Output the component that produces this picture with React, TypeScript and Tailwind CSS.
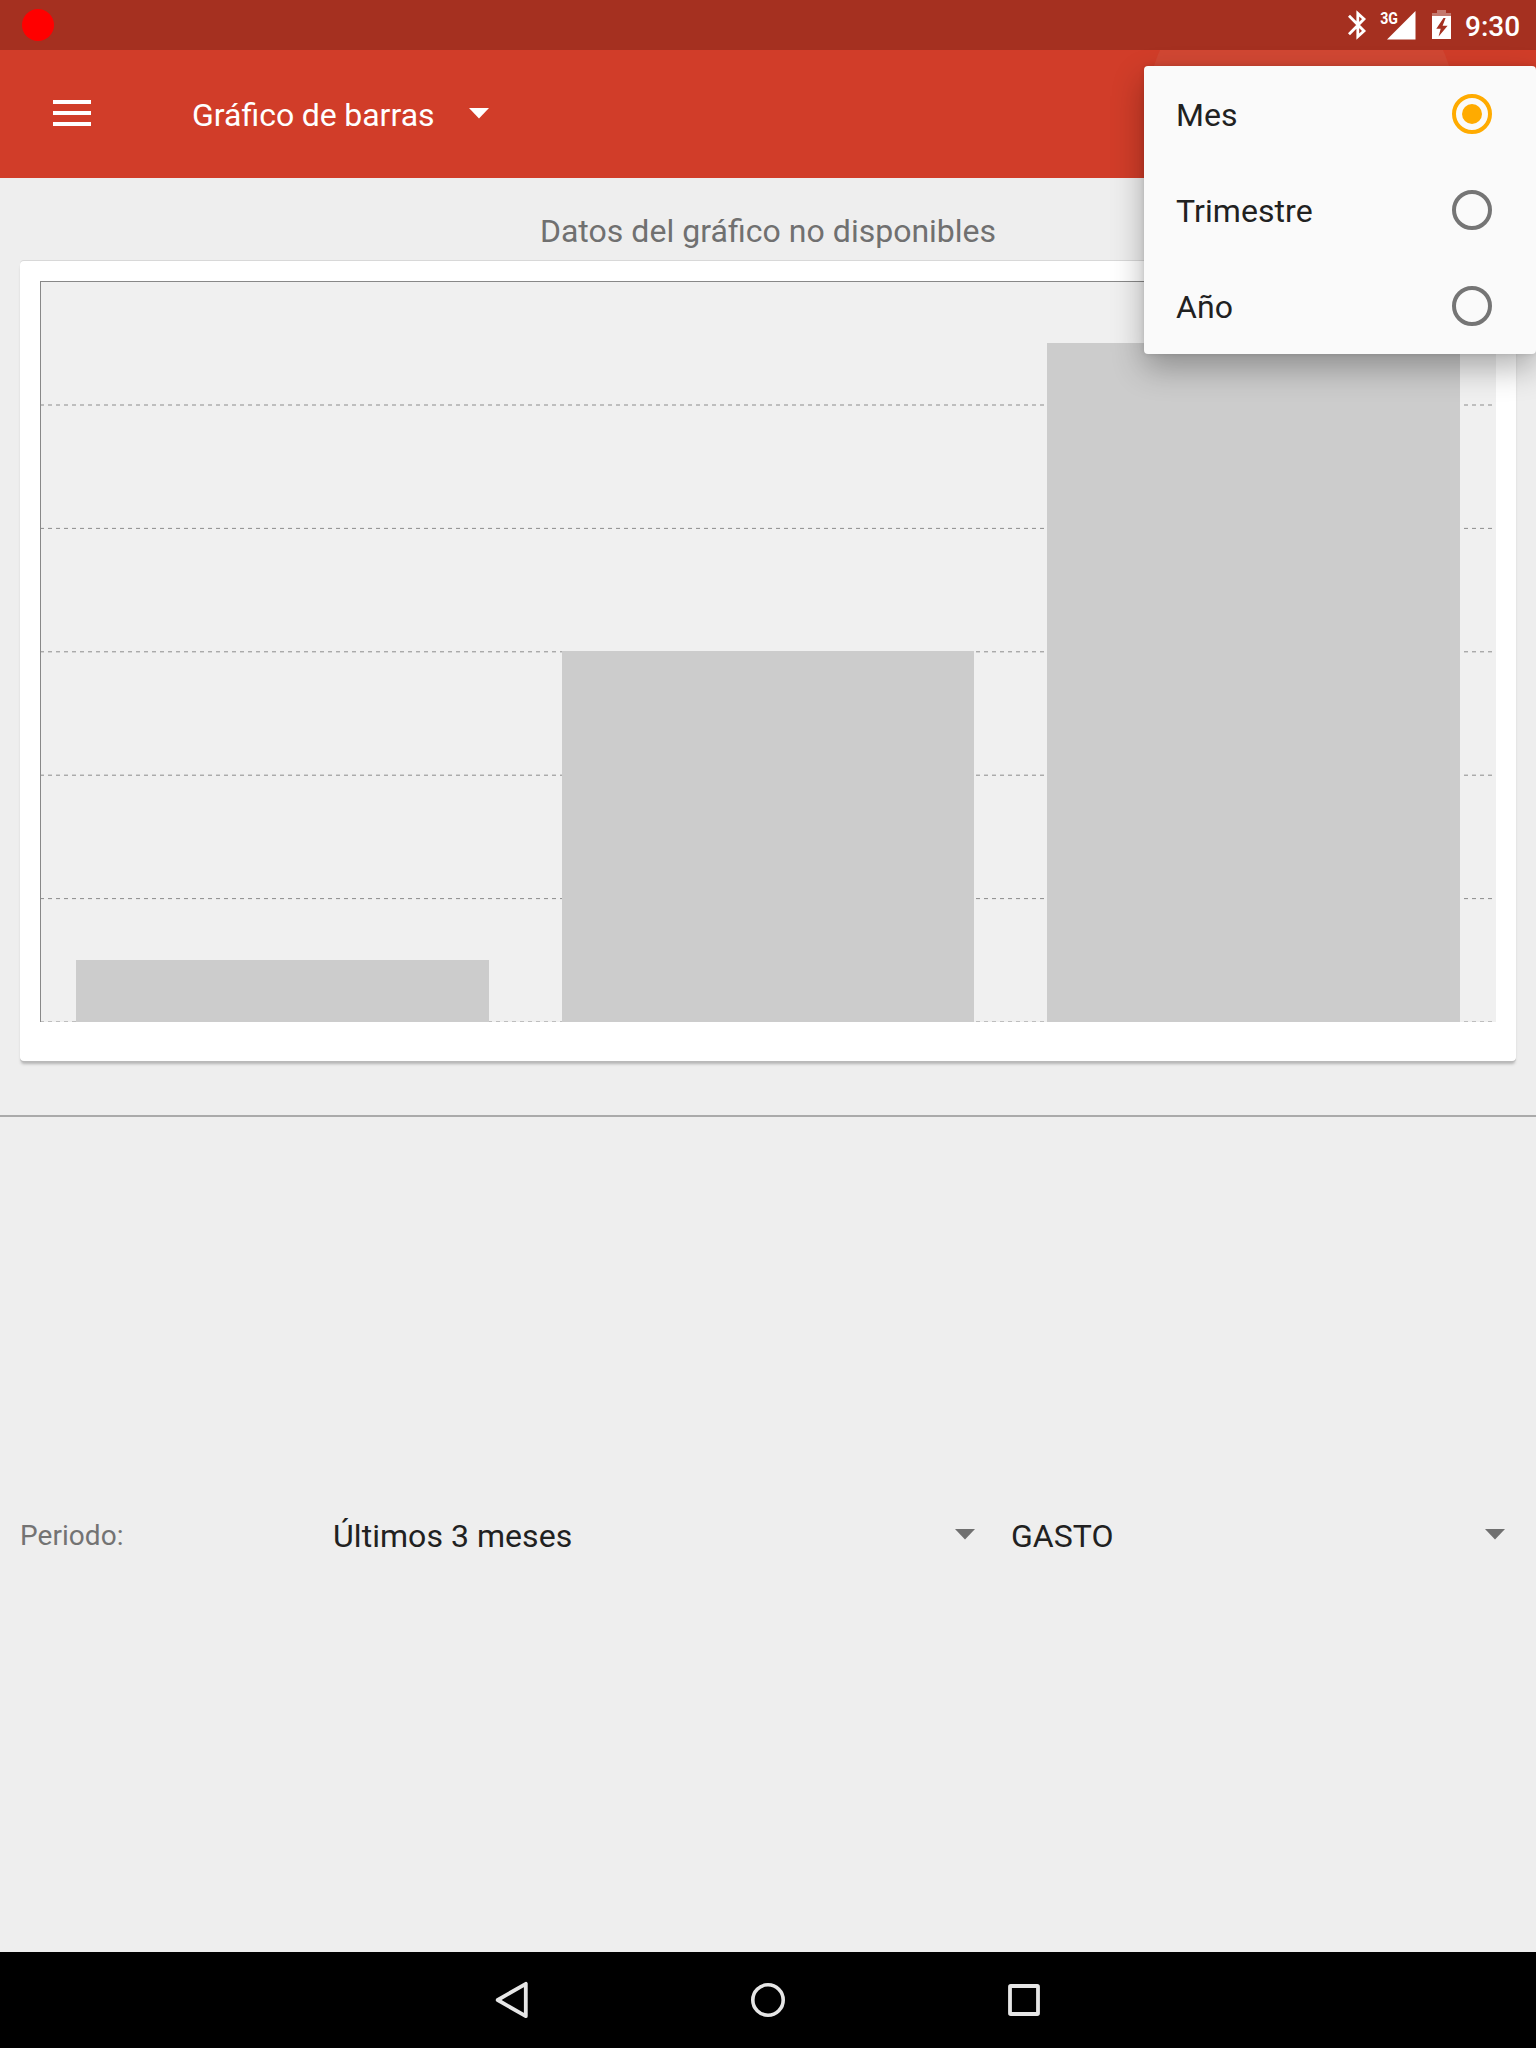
import React from "react";

const GRID_LINES = [405, 528.4, 651.8, 775.2, 898.6, 1022];
const BARS = [
  { x: 76, y: 960, w: 413 },
  { x: 562, y: 651, w: 412 },
  { x: 1047, y: 343, w: 413 },
];
const OPTIONS = [
  { label: "Mes", selected: true },
  { label: "Trimestre", selected: false },
  { label: "Año", selected: false },
];

function Caret({ className }: { className: string }) {
  return (
    <svg className={className} width="20" height="11" viewBox="0 0 20 11">
      <path d="M0 0h20L10 10.5z" fill="currentColor" />
    </svg>
  );
}

function StatusBar() {
  return (
    <div className="flex h-[50px] items-start bg-[#a53020] text-white">
      <div className="mt-[9px] ml-[22px] size-8 rounded-full bg-[#ff0000]" />
      <svg className="ml-auto" width="125" height="50" viewBox="1340 0 125 50">
        <path
          d="M1349 15.7L1364 31L1357.8 36.6V13.4L1364 19L1349 34.3"
          fill="none"
          stroke="white"
          strokeWidth="2.8"
        />
        <path d="M1387 39.5L1415.5 11V39.5z" fill="white" />
        <text
          x="1380.2"
          y="23.5"
          fill="white"
          fontFamily="Roboto"
          fontWeight="700"
          fontSize="16.5"
          textLength="17.8"
          lengthAdjust="spacingAndGlyphs"
        >
          3G
        </text>
        <path d="M1437 10h9v3h5v3h-19v-3h5z" fill="white" fillOpacity="0.35" />
        <path
          d="M1432 16h19v23h-19zM1443.5 18L1436.3 28.7H1440.7L1438.6 36.6L1447.6 25.8H1442.6L1445.6 18z"
          fill="white"
          fillRule="evenodd"
        />
      </svg>
      <div className="mr-4 w-[55px] text-right text-[28px] leading-[54px] font-medium whitespace-nowrap">
        9:30
      </div>
    </div>
  );
}

function Toolbar() {
  return (
    <div className="relative flex h-32 items-start overflow-hidden bg-[#d13d29] text-white">
      <svg className="mt-[50px] ml-[53px]" width="38" height="26" viewBox="0 0 38 26">
        <path d="M0 0h38v4H0zM0 11h38v4H0zM0 22h38v4H0z" fill="white" />
      </svg>
      <div className="mt-[46px] ml-[101px] w-[243px] text-[32px] leading-[38px] [word-spacing:-0.4px] whitespace-nowrap">
        Gráfico de barras
      </div>
      <Caret className="mt-[58px] ml-[34px] text-white" />
      <div className="absolute top-[-91px] left-[1146px] size-[311px] rounded-full bg-[#d14733]" />
    </div>
  );
}

function ChartCard() {
  return (
    <div className="mx-5 mt-[11px] h-[800px] rounded-[4px] bg-white shadow-[0_-1px_0_#d8d8d8,0_1px_0_#b9b9b9,0_4px_3px_-1px_#b4b4b4]">
      <svg width="1496" height="800" viewBox="20 261 1496 800">
        <clipPath id="plot">
          <rect x="40" y="281" width="1456" height="741" />
        </clipPath>
        <g clipPath="url(#plot)">
          <rect x="40" y="281" width="1456" height="741" fill="#f0f0f0" />
          {GRID_LINES.map((y) => (
            <path key={y} d={`M40 ${y}H1496`} stroke="#8c8c8c" strokeWidth="1" strokeDasharray="4 4" />
          ))}
          {BARS.map((b) => (
            <rect key={b.x} x={b.x} y={b.y} width={b.w} height={1022 - b.y} fill="#cccccc" />
          ))}
          <path d="M40 281.5H1496M40.5 281V1022" stroke="#888888" strokeWidth="1" />
        </g>
      </svg>
    </div>
  );
}

function Filters() {
  return (
    <div className="mt-[387px] flex h-16 items-start text-[32px] leading-[38px] tracking-[0.05px] text-[#212121]">
      <div className="mt-[15px] ml-5 w-[313px] text-[28px] leading-[34px] text-[#737373]">Periodo:</div>
      <div className="mt-[13px] w-[622px]">Últimos 3 meses</div>
      <Caret className="mt-[25px] text-[#707070]" />
      <div className="mt-[13px] ml-9 w-[474px]">GASTO</div>
      <Caret className="mt-[25px] text-[#707070]" />
    </div>
  );
}

function PeriodMenu() {
  return (
    <div className="absolute top-[66px] right-0 w-[392px] rounded-[4px] bg-[#fafafa] shadow-[0_14px_32px_rgba(0,0,0,0.3),0_0_5px_rgba(0,0,0,0.12)]">
      {OPTIONS.map((o) => (
        <div key={o.label} className="flex h-24 items-center justify-between pr-11 pl-8">
          <span className="pt-[2px] text-[32px] leading-[38px] tracking-[0.08px] text-[#212121]">{o.label}</span>
          {o.selected ? (
            <span className="flex size-10 items-center justify-center rounded-full border-4 border-[#ffab00]">
              <span className="size-5 rounded-full bg-[#ffab00]" />
            </span>
          ) : (
            <span className="size-10 rounded-full border-4 border-[#757575]" />
          )}
        </div>
      ))}
    </div>
  );
}

function NavBar() {
  return (
    <div className="mt-auto flex h-24 items-center justify-center gap-[208px] bg-black text-[#e6e6e6]">
      <svg width="48" height="48" viewBox="-24 -24 48 48" fill="none" stroke="currentColor">
        <path d="M13.8 -16.2V16.2L-14.3 0z" strokeWidth="3.8" strokeLinejoin="round" />
      </svg>
      <svg width="48" height="48" viewBox="-24 -24 48 48" fill="none" stroke="currentColor">
        <circle r="15.2" strokeWidth="3.6" />
      </svg>
      <svg width="48" height="48" viewBox="-24 -24 48 48" fill="none" stroke="currentColor">
        <rect x="-14" y="-14" width="28" height="28" rx="0.8" strokeWidth="3.8" />
      </svg>
    </div>
  );
}

export default function App() {
  return (
    <div className="relative flex h-[2048px] w-[1536px] flex-col overflow-hidden bg-[#eeeeee] font-[Roboto,sans-serif]">
      <StatusBar />
      <Toolbar />
      <div className="mt-[34px] text-center text-[32px] leading-[38px] [word-spacing:0.2px] text-[#707070]">
        Datos del gráfico no disponibles
      </div>
      <ChartCard />
      <div className="mt-[54px] h-[2px] shrink-0 bg-[#aaaaaa]" />
      <Filters />
      <PeriodMenu />
      <NavBar />
    </div>
  );
}
